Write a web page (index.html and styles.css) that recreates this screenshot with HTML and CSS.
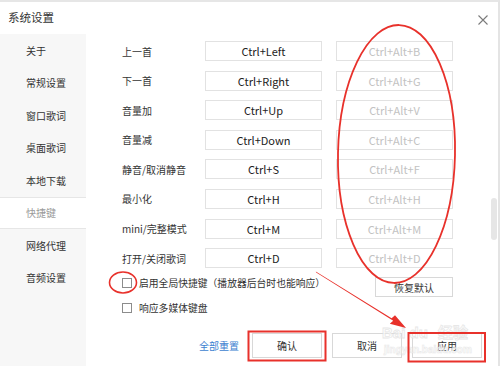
FILE: index.html
```html
<!DOCTYPE html>
<html lang="zh-CN">
<head>
<meta charset="utf-8">
<title>系统设置</title>
<link rel="stylesheet" href="styles.css">
</head>
<body>
<div class="page">
  <div class="window">
    <header class="titlebar">
      <span class="title">系统设置</span>
      <svg class="close" width="10" height="10" viewBox="0 0 10 10"><path d="M0.5 0.5L9.5 9.5M9.5 0.5L0.5 9.5" stroke="#7a7a7a" stroke-width="1.1" fill="none"/></svg>
    </header>
    <div class="body">
      <nav class="sidebar">
        <div class="nav-item">关于</div>
        <div class="nav-item">常规设置</div>
        <div class="nav-item">窗口歌词</div>
        <div class="nav-item">桌面歌词</div>
        <div class="nav-item">本地下载</div>
        <div class="nav-item active">快捷键</div>
        <div class="nav-item">网络代理</div>
        <div class="nav-item">音频设置</div>
      </nav>
      <main class="main">
        <div class="scroll-area">
          <div class="content">
            <div class="hotkeys">
              <span class="label">上一首</span><div class="key">Ctrl+Left</div><div class="key global">Ctrl+Alt+B</div>
              <span class="label">下一首</span><div class="key">Ctrl+Right</div><div class="key global">Ctrl+Alt+G</div>
              <span class="label">音量加</span><div class="key">Ctrl+Up</div><div class="key global">Ctrl+Alt+V</div>
              <span class="label">音量减</span><div class="key">Ctrl+Down</div><div class="key global">Ctrl+Alt+C</div>
              <span class="label">静音/取消静音</span><div class="key">Ctrl+S</div><div class="key global">Ctrl+Alt+F</div>
              <span class="label">最小化</span><div class="key">Ctrl+H</div><div class="key global">Ctrl+Alt+H</div>
              <span class="label">mini/完整模式</span><div class="key">Ctrl+M</div><div class="key global">Ctrl+Alt+M</div>
              <span class="label">打开/关闭歌词</span><div class="key">Ctrl+D</div><div class="key global">Ctrl+Alt+D</div>
            </div>
            <div class="extra">
              <div class="checks">
                <label class="check"><span class="box"></span>启用全局快捷键（播放器后台时也能响应）</label>
                <label class="check"><span class="box"></span>响应多媒体键盘</label>
              </div>
              <button class="btn reset">恢复默认</button>
            </div>
          </div>
          <div class="scrollbar"><div class="thumb"></div></div>
        </div>
        <footer class="footer">
          <a class="link">全部重置</a>
          <button class="btn action">确认</button>
          <button class="btn action">取消</button>
          <button class="btn action">应用</button>
        </footer>
      </main>
    </div>
  </div>
  <svg class="annotations" width="500" height="366" viewBox="0 0 500 366">
    <g class="watermark">
      <text x="382" y="338" class="wm-big">Bai du</text>
      <text x="438" y="338" class="wm-big">经验</text>
      <text x="384" y="353" class="wm-small">jingyan.baidu.com</text>
    </g>
    <g fill="none" stroke="#e8312b">
      <ellipse cx="396.5" cy="154" rx="58.5" ry="129" stroke-width="1.8" transform="rotate(1.2 396.5 154)"/>
      <ellipse cx="123" cy="282.5" rx="13.5" ry="10.5" stroke-width="1.6"/>
      <rect x="248.5" y="331.5" width="77" height="29" stroke-width="2"/>
      <rect x="408.5" y="333" width="76.5" height="28.5" stroke-width="2"/>
    </g>
    <polygon fill="#e8312b" points="315.8,271.6 316.2,272.4 393.2,320.8 389.8,323.8 406,328 395,315.3 391.6,318.2"/>
  </svg>
</div>
</body>
</html>
```

FILE: styles.css
```css
* { box-sizing: border-box; }

html, body {
  margin: 0;
  padding: 0;
  background: #ffffff;
}

body {
  font-family: "Noto Sans CJK SC", "Noto Sans", sans-serif;
  color: #333333;
}

.page {
  position: relative;
  width: 500px;
  height: 366px;
  overflow: hidden;
}

.window {
  width: 500px;
  height: 366px;
  background: #ffffff;
  border-top: 2px solid #e6e6e6;
  border-right: 2px solid #e4e4e4;
  display: flex;
  flex-direction: column;
}

.titlebar {
  height: 32px;
  display: flex;
  align-items: center;
  justify-content: space-between;
  padding: 0 10px 0 8px;
}

.title {
  font-size: 11.5px;
  color: #333333;
  margin-top: -2px;
}

.close {
  display: block;
  margin-top: 3px;
}

.body {
  flex: 1;
  display: flex;
  min-height: 0;
}

.sidebar {
  width: 86px;
  background: #f7f7f7;
  display: flex;
  flex-direction: column;
}

.nav-item {
  height: 32.5px;
  display: flex;
  align-items: center;
  padding-left: 26px;
  font-size: 10px;
  color: #333333;
}

.nav-item.active {
  background: #ffffff;
  border-top: 1px solid #e6e6e6;
  border-bottom: 1px solid #e6e6e6;
  color: #9a9a9a;
}

.main {
  flex: 1;
  display: flex;
  flex-direction: column;
  min-width: 0;
}

.scroll-area {
  flex: 1;
  display: flex;
  min-height: 0;
}

.content {
  flex: 1;
  padding: 7px 0 0 36px;
}

.hotkeys {
  display: grid;
  grid-template-columns: 69px 117px 117px;
  grid-auto-rows: 20px;
  column-gap: 14px;
  row-gap: 9.6px;
}

.label {
  align-self: center;
  font-size: 10px;
  color: #333333;
  white-space: nowrap;
}

.key {
  border: 1px solid #e2e2e2;
  font-size: 11px;
  line-height: 18px;
  text-align: center;
  color: #222222;
}

.key.global {
  color: #c2c2c2;
}

.extra {
  width: 331px;
  margin-top: 7px;
  display: flex;
  justify-content: space-between;
  align-items: flex-start;
}

.checks {
  display: flex;
  flex-direction: column;
  gap: 9px;
}

.check {
  height: 16px;
  display: flex;
  align-items: center;
  gap: 7px;
  font-size: 9.8px;
  color: #333333;
  white-space: nowrap;
}

.box {
  width: 10px;
  height: 10px;
  border: 1px solid #8c8c8c;
  background: #ffffff;
  flex: none;
}

.btn {
  font-family: "Noto Sans CJK SC", "Noto Sans", sans-serif;
  background: #ffffff;
  border: 1px solid #d8d8d8;
  color: #333333;
  font-size: 10px;
  padding: 0;
  margin: 0;
}

.reset {
  width: 78px;
  height: 20px;
  margin-top: 2px;
}

.scrollbar {
  width: 6px;
  margin-right: 1px;
}

.thumb {
  margin-top: 164px;
  height: 42px;
  background: #e6e6e6;
  border-radius: 3px;
}

.footer {
  height: 33px;
  padding: 0 16px 8px 0;
  display: flex;
  align-items: center;
  justify-content: flex-end;
  gap: 10px;
}

.link {
  font-size: 10px;
  color: #3d7fd0;
  margin-right: 3px;
}

.action {
  width: 70px;
  height: 25px;
}

.annotations {
  position: absolute;
  top: 0;
  left: 0;
  pointer-events: none;
}

.wm-big {
  font-family: "Liberation Sans", "Noto Sans CJK SC", sans-serif;
  font-size: 15px;
  font-weight: bold;
  fill: #ffffff;
  stroke: #e2e2e2;
  stroke-width: 0.8;
  opacity: 0.8;
}

.wm-small {
  font-family: "Liberation Sans", sans-serif;
  font-size: 10px;
  font-weight: bold;
  fill: #ffffff;
  stroke: #e4e4e4;
  stroke-width: 0.6;
  opacity: 0.8;
}
```
